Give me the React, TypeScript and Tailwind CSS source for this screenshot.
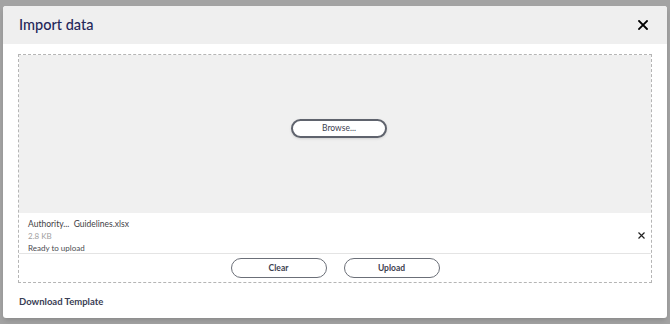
export default function App() {
  return (
    <div className="w-[670px] h-[324px] bg-[#a3a3a3] pt-[6px] pl-[3px] overflow-hidden" style={{ fontFamily: "Lato, 'Noto Sans', sans-serif" }}>
      <div className="w-[664px] h-[312px] bg-white rounded-[3px] flex flex-col shadow-md">
        <div className="h-[38px] bg-[#efefef] rounded-t-[3px] flex items-center justify-between pl-[16px] pr-[19px]">
          <h1 className="text-[14.5px] font-medium text-[#24275a] leading-none">Import data</h1>
          <svg width="10" height="10" viewBox="0 0 10 10" className="text-black">
            <path d="M1 1L9 9M9 1L1 9" stroke="currentColor" strokeWidth="1.8" strokeLinecap="square" />
          </svg>
        </div>
        <div className="pt-[10px] pl-[15px]">
          <div className="w-[634px] h-[229px] border border-dashed border-[#b5b5b5] flex flex-col">
            <div className="h-[158px] bg-[#f0f0f0] flex items-center justify-center pb-[11px] pl-[8px]">
              <button className="w-[96px] h-[19px] rounded-full border-2 border-[#5f636d] bg-white text-[8.5px] text-[#3d4150] leading-none shadow-sm">
                Browse...
              </button>
            </div>
            <div className="h-[41px] border-b border-[#e4e4e4] flex items-center justify-between pl-[9px] pr-[6px] pt-[5px]">
              <div className="flex flex-col leading-[12px]">
                <span className="text-[#3f4146] text-[8.5px]">Authority...&nbsp; Guidelines.xlsx</span>
                <span className="text-[#a0a0a0] text-[8px]">2.8 KB</span>
                <span className="text-[#4a4c52] text-[8px]">Ready to upload</span>
              </div>
              <svg width="7" height="7" viewBox="0 0 7 7" className="text-[#222]">
                <path d="M0.5 0.5L6.5 6.5M6.5 0.5L0.5 6.5" stroke="currentColor" strokeWidth="1.2" />
              </svg>
            </div>
            <div className="flex-1 flex items-center justify-center gap-[17px]">
              <button className="w-[96px] h-[20px] rounded-full border-[1.5px] border-[#6b6f78] bg-white text-[8.5px] font-bold text-[#3d4150] leading-none">
                Clear
              </button>
              <button className="w-[96px] h-[20px] rounded-full border-[1.5px] border-[#6b6f78] bg-white text-[8.5px] font-bold text-[#3d4150] leading-none">
                Upload
              </button>
            </div>
          </div>
          <div className="pt-[12px] pl-[1px] text-[9.5px] font-bold text-[#3a3e55]">Download Template</div>
        </div>
      </div>
    </div>
  );
}
